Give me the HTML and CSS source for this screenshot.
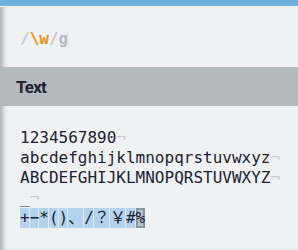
FILE: index.html
```html
<!DOCTYPE html>
<html lang="en">
<head>
  <meta charset="UTF-8" />
  <title>Regex Tester</title>
  <link rel="stylesheet" href="styles.css">
</head>
<body>
  <div class="topbar"></div>
  <div class="main">
    <div class="pattern">
      <span class="delim">/</span><span class="token">\w</span><span class="delim">/</span><span class="flags">g</span>
    </div>
    <div class="band">Text</div>
    <div class="editor">
      <div class="line">1234567890<span class="eol">¬</span></div>
      <div class="line">abcdefghijklmnopqrstuvwxyz<span class="eol">¬</span></div>
      <div class="line">ABCDEFGHIJKLMNOPQRSTUVWXYZ<span class="eol">¬</span></div>
      <div class="line">_<span class="eol">¬</span></div>
      <div class="line"><span class="hit">+</span><span class="hit">−</span><span class="hit">*</span><span class="hit">(</span><span class="hit">)</span><span class="hit">、</span><span class="hit">/</span><span class="hit">？</span><span class="hit">￥</span><span class="hit">#</span><span class="hit cur">%</span></div>
    </div>
  </div>
</body>
</html>
```
FILE: styles.css
```css
body { margin: 0; background: #eff1f3; font-family: "DejaVu Sans Mono", "Noto Sans CJK JP", monospace; }
.topbar { height: 7px; background: #6fb0e0; border-bottom: 1px solid #f6f8f9; box-sizing: border-box; }
.main { height: 243px; box-shadow: inset 6px 0 5px -3px rgba(0,0,0,0.28); }
.pattern { height: 60px; line-height: 64px; padding-left: 20px; font-size: 16px; font-weight: bold; }
.delim { color: #c3c7cb; }
.token { color: #e98e0c; }
.flags { color: #b5b9bd; }
.band { height: 39px; line-height: 40px; padding-left: 16px; background: #b5babd; color: #1f2533; font-family: Roboto, sans-serif; font-weight: bold; font-size: 17px; letter-spacing: -0.9px; }
.editor { padding: 22px 0 0 20px; font-size: 16px; line-height: 20px; color: #1c2330; }
.line { height: 20px; white-space: pre; }
.eol { color: #c7cbcf; }
.hit { display: inline-block; background: #b3d3ee; box-shadow: inset -1px 0 0 #dfe8f0; }
.cur { background: #b2c4d2; box-shadow: inset 0 0 0 2px #8d959c; }
```
